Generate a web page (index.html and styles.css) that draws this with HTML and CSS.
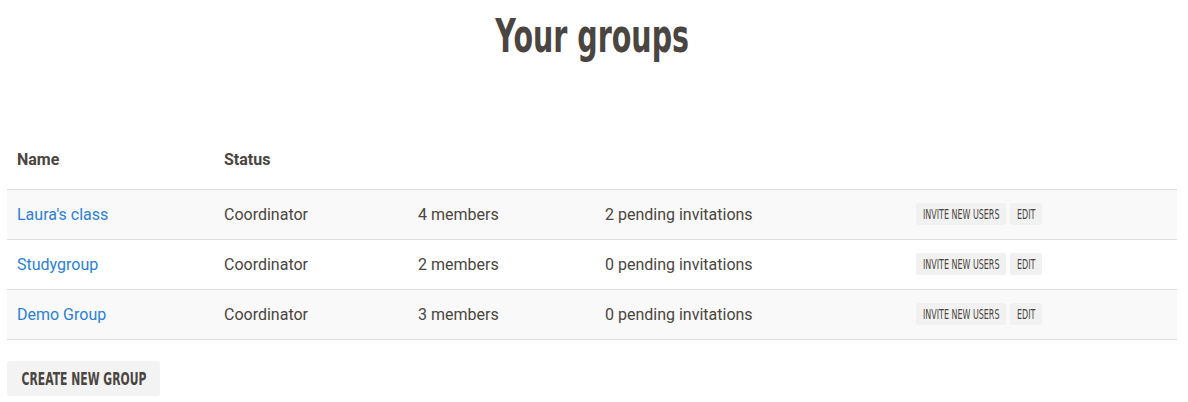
FILE: index.html
```html
<!DOCTYPE html>
<html>
<head>
<meta charset="utf-8">
<link rel="stylesheet" href="styles.css">
</head>
<body>
<main class="page">
  <h1 class="title"><span class="title-text">Your groups</span></h1>
  <table class="groups">
    <thead>
      <tr>
        <th class="c-name">Name</th>
        <th class="c-status">Status</th>
        <th class="c-members"></th>
        <th class="c-pending"></th>
        <th class="c-actions"></th>
      </tr>
    </thead>
    <tbody>
      <tr class="odd">
        <td><a href="#" class="link">Laura's class</a></td>
        <td>Coordinator</td>
        <td>4 members</td>
        <td>2 pending invitations</td>
        <td class="btns"><span class="btn-sm btn-invite"><span class="sm-text">Invite new users</span></span><span class="btn-sm btn-edit"><span class="sm-text">Edit</span></span></td>
      </tr>
      <tr>
        <td><a href="#" class="link">Studygroup</a></td>
        <td>Coordinator</td>
        <td>2 members</td>
        <td>0 pending invitations</td>
        <td class="btns"><span class="btn-sm btn-invite"><span class="sm-text">Invite new users</span></span><span class="btn-sm btn-edit"><span class="sm-text">Edit</span></span></td>
      </tr>
      <tr class="odd">
        <td><a href="#" class="link">Demo Group</a></td>
        <td>Coordinator</td>
        <td>3 members</td>
        <td>0 pending invitations</td>
        <td class="btns"><span class="btn-sm btn-invite"><span class="sm-text">Invite new users</span></span><span class="btn-sm btn-edit"><span class="sm-text">Edit</span></span></td>
      </tr>
    </tbody>
  </table>
  <div class="actions"><span class="btn"><span class="btn-text">Create new group</span></span></div>
</main>
</body>
</html>
```
FILE: styles.css
```css
html, body {
  margin: 0;
  padding: 0;
  background: #fff;
}
body {
  font-family: Roboto, "Liberation Sans", sans-serif;
  font-size: 16px;
  color: #4a4540;
}
.page {
  padding: 0 11px 0 7px;
}
.title {
  margin: 0;
  padding-top: 10px;
  height: 124px;
  box-sizing: border-box;
  text-align: center;
  font-family: "DejaVu Sans", sans-serif;
  font-weight: 700;
  font-size: 46px;
  line-height: 52px;
  color: #4a4540;
}
.title-text {
  display: inline-block;
  transform: scaleX(0.62);
  transform-origin: center;
}
.groups {
  width: 100%;
  border-collapse: collapse;
  table-layout: fixed;
}
.groups th {
  text-align: left;
  font-weight: 700;
  height: 65px;
  padding: 6px 10px 0;
  vertical-align: middle;
  border-bottom: 1px solid #ddd;
  box-sizing: border-box;
}
.c-name { width: 207px; }
.c-status { width: 194px; }
.c-members { width: 187px; }
.c-pending { width: 311px; }
.groups td {
  height: 50px;
  padding: 0 10px;
  vertical-align: middle;
  border-bottom: 1px solid #ddd;
  box-sizing: border-box;
}
.groups tr.odd td {
  background: #f9f9f9;
}
.link {
  color: #2d7fd0;
  text-decoration: none;
}
.btns {
  padding-top: 4px;
}
.btns .btn-sm {
  display: inline-flex;
  justify-content: center;
  align-items: center;
  vertical-align: middle;
  background: #f1f1f1;
  border-radius: 2px;
  height: 22px;
  margin-right: 4px;
  overflow: visible;
  white-space: nowrap;
}
.btn-invite { width: 90px; }
.btn-edit { width: 32px; }
.sm-text {
  display: inline-block;
  flex: none;
  transform: scaleX(0.57);
  transform-origin: center;
  font-family: "DejaVu Sans", sans-serif;
  font-size: 14px;
  line-height: 22px;
  text-transform: uppercase;
  color: #4a4540;
}
.actions {
  padding-top: 21px;
}
.btn {
  display: inline-flex;
  justify-content: center;
  align-items: center;
  width: 153px;
  height: 35px;
  background: #f3f3f3;
  border-radius: 3px;
  white-space: nowrap;
}
.btn-text {
  display: inline-block;
  flex: none;
  transform: scaleX(0.6);
  transform-origin: center;
  font-family: "DejaVu Sans", sans-serif;
  font-size: 18px;
  font-weight: 700;
  line-height: 35px;
  text-transform: uppercase;
  color: #4a4540;
}
```
